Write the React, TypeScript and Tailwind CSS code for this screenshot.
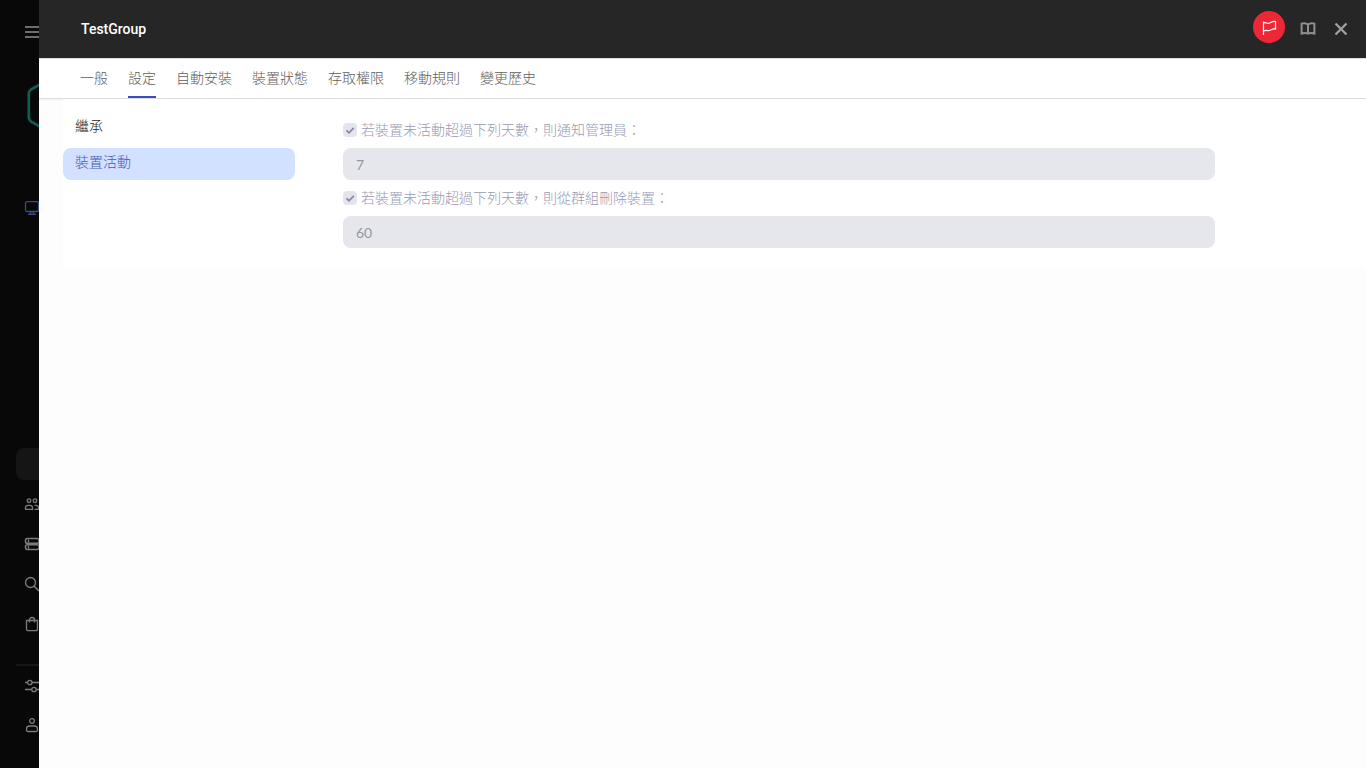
import React, { useState } from 'react';

const TABS = ['一般', '設定', '自動安裝', '裝置狀態', '存取權限', '移動規則', '變更歷史'];
const SECTIONS = ['繼承', '裝置活動'];

interface IconProps {
  className?: string;
  children: React.ReactNode;
}

const Icon: React.FC<IconProps> = ({ className = '', children }) => (
  <svg
    viewBox="0 0 16 16"
    fill="none"
    stroke="currentColor"
    strokeWidth="1.3"
    aria-hidden="true"
    className={`h-4 w-4 shrink-0 ${className}`}
  >
    {children}
  </svg>
);

interface NavButtonProps {
  label: string;
  className?: string;
  children: React.ReactNode;
}

const NavButton: React.FC<NavButtonProps> = ({ label, className = '', children }) => (
  <button
    type="button"
    aria-label={label}
    className={`flex h-10 w-full shrink-0 items-center pl-6 ${className}`}
  >
    <Icon>{children}</Icon>
  </button>
);

// Dimmed navigation, the panel covers everything but its left edge
const Sidebar: React.FC = () => (
  <nav className="flex w-[39px] shrink-0 flex-col overflow-hidden bg-[#080808] pt-3 text-[#7c7c7c]">
    <NavButton label="menu" className="text-[#6c6c6c]">
      <path d="M1 3h15M1 8h15M1 13h15" strokeWidth="2" />
    </NavButton>
    <svg viewBox="0 0 44 48" fill="none" aria-hidden="true" className="mt-[30px] ml-[26px] h-12 w-11 shrink-0">
      <path
        d="M20 -1 5 7.500Q2.800 9 2.800 11.500v24q0 2.500 2.200 4L20 48l14-8.500q3-1.500 3-4V11.500q0-2.500-3-4Z"
        stroke="#125c51"
        strokeWidth="2.700"
      />
    </svg>
    <NavButton label="assets" className="mt-[58px] text-[#3a4c86]">
      <rect x="1.500" y="1.700" width="13" height="9.800" rx="1.500" />
      <path d="M6.500 11.500v2.500M9.500 11.500v2.500M4 14.300h8" />
    </NavButton>
    <div className="mt-[220px] ml-4 h-8 w-10 shrink-0 rounded-lg bg-[#151515]" />
    <NavButton label="users" className="mt-1">
      <circle cx="5" cy="4.700" r="1.800" />
      <circle cx="11" cy="4.700" r="1.800" />
      <path d="M1.500 13.300v-1.500q0-2.500 2.500-2.500h2q2.500 0 2.500 2.500v1.500ZM10.500 9.300H12q2.500 0 2.500 2.500v1.500h-4" />
    </NavButton>
    <NavButton label="servers">
      <rect x="1.500" y="2.600" width="13.500" height="4.600" rx="1.800" strokeWidth="1.500" />
      <rect x="1.500" y="8.800" width="13.500" height="4.600" rx="1.800" strokeWidth="1.500" />
      <path d="M4.500 3.500v3M4.500 9.700v3" />
    </NavButton>
    <NavButton label="search">
      <circle cx="6.500" cy="6.500" r="5" />
      <path d="m10 10 5 5" strokeWidth="1.500" />
    </NavButton>
    <NavButton label="store">
      <path d="M2.500 4.500h11v8.200q0 2-2 2h-7q-2 0-2-2Z" />
      <path d="M5.500 6.500V4q0-2.500 2.500-2.500T10.500 4v2.500" />
    </NavButton>
    <div className="mt-5 ml-4 h-0.5 w-10 shrink-0 bg-[#171717]" />
    <NavButton label="settings">
      <path d="M1 4.500h2.500M8 4.500h8M1 11.500h6.500M12 11.500h4" />
      <circle cx="5.800" cy="4.500" r="2.200" />
      <circle cx="10" cy="11.500" r="2.200" />
    </NavButton>
    <NavButton label="account">
      <circle cx="8" cy="3" r="2.300" />
      <path d="M2.500 12v-1q0-3 3-3h5q3 0 3 3v1q0 1.500-1.500 1.500H4Q2.500 13.500 2.500 12Z" />
    </NavButton>
  </nav>
);

interface LimitFieldProps {
  id: string;
  label: string;
  value: string;
}

const LimitField: React.FC<LimitFieldProps> = ({ id, label, value }) => (
  <div>
    <div className="flex h-9 items-center gap-1">
      <span className="relative flex h-3.5 w-3.5 shrink-0">
        <input
          id={`${id}-enabled`}
          type="checkbox"
          defaultChecked
          disabled
          className="h-3.5 w-3.5 appearance-none rounded bg-[#e4e4ee]"
        />
        <Icon className="pointer-events-none absolute inset-0 h-3.5! w-3.5! text-[#8585a8]">
          <path d="m4 8.500 2.800 2.700L12.300 5.500" strokeWidth="2" />
        </Icon>
      </span>
      <label htmlFor={`${id}-enabled`} className="text-sm font-light text-[#9a9ab2]">
        {label}
      </label>
    </div>
    <input
      type="text"
      aria-label={label}
      defaultValue={value}
      disabled
      className="block h-8 w-full rounded-lg bg-[#e6e7ec] px-[13px] font-['Lato','Noto_Sans_CJK_TC',sans-serif] text-sm text-[#9596a6]"
    />
  </div>
);

export default function App() {
  const [tab, setTab] = useState('設定');
  const [section, setSection] = useState('裝置活動');

  return (
    <div className="flex min-h-screen bg-[#fdfdfd] font-['Inter','Noto_Sans_CJK_TC',sans-serif]">
      <Sidebar />

      <div className="flex min-w-0 flex-1 flex-col">
        <header className="flex h-[58px] items-center bg-[#262626] pr-[17px] pl-[42px]">
          <h1 className="flex-1 font-['Roboto','Noto_Sans_CJK_TC',sans-serif] text-sm font-medium text-white">TestGroup</h1>
          <button
            type="button"
            aria-label="flag"
            className="mb-1 flex h-8 w-8 items-center justify-center rounded-full bg-[#ee2737] text-white"
          >
            <Icon>
              <path d="M2.500 2.500V16M2.500 3.800C4.500 3 6 4.800 8 4.200S11 2 14.500 2.500V10C11.500 9.500 10 11 8.500 11.500S5 10.800 2.500 12" strokeWidth="1.200" />
            </Icon>
          </button>
          <button type="button" aria-label="help" className="ml-[15px] text-[#909090]">
            <Icon>
              <path
                d="M8 3.500Q5 1.300 1.600 2.700v9.800Q5 11.300 8 12.500 11 11.300 14.400 12.500V2.700Q11 1.300 8 3.500ZM8 3.500v9"
                strokeWidth="2"
              />
            </Icon>
          </button>
          <button type="button" aria-label="close" className="ml-[17px] text-[#a0a0a0]">
            <Icon>
              <path d="m2.500 2.500 11 11M13.500 2.500l-11 11" strokeWidth="2.400" />
            </Icon>
          </button>
        </header>

        <div
          role="tablist"
          className="flex h-[41px] gap-5 border-t border-b border-[#dedede] bg-white pl-[41px] shadow-xs"
        >
          {TABS.map((name) => (
            <button
              key={name}
              type="button"
              role="tab"
              aria-selected={tab === name}
              onClick={() => setTab(name)}
              className={`border-b-2 text-sm font-light text-[#606060] ${
                tab === name ? 'border-[#3b4cc0]' : 'border-transparent'
              }`}
            >
              {name}
            </button>
          ))}
        </div>

        <main className="ml-6 flex bg-white pt-[13px] pb-5">
          <ul className="w-64 shrink-0 space-y-1 pr-6">
            {SECTIONS.map((name) => (
              <li key={name}>
                <button
                  type="button"
                  onClick={() => setSection(name)}
                  className={`h-8 w-full rounded-lg px-3 pb-1 text-left text-sm font-light ${
                    section === name ? 'bg-[#d2e1ff] text-[#4a56b8]' : 'text-[#1d1d1d]'
                  }`}
                >
                  {name}
                </button>
              </li>
            ))}
          </ul>

          <section className="min-w-0 flex-1 pr-[151px] pl-6">
            <LimitField id="notify" label="若裝置未活動超過下列天數，則通知管理員：" value="7" />
            <LimitField id="remove" label="若裝置未活動超過下列天數，則從群組刪除裝置：" value="60" />
          </section>
        </main>
      </div>
    </div>
  );
}
